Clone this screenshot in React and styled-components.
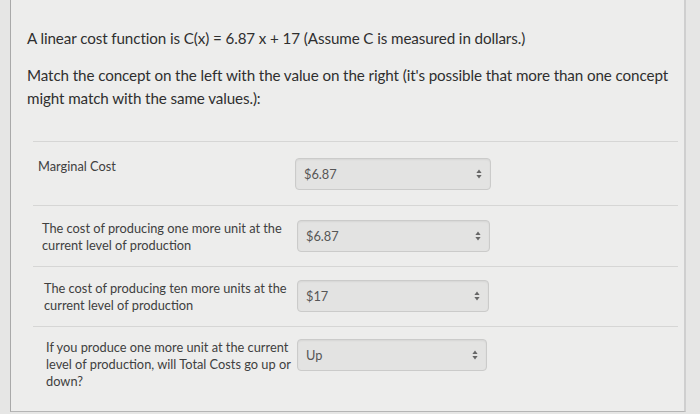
import React from "react";
import styled, { createGlobalStyle } from "styled-components";

const GlobalStyle = createGlobalStyle`
  html, body {
    margin: 0;
    padding: 0;
    background: #e6e6e5;
    font-family: Lato, "Open Sans", "Liberation Sans", sans-serif;
  }
`;

const Page = styled.div`
  width: 700px;
  height: 414px;
  overflow: hidden;
  padding-left: 10px;
  box-sizing: border-box;
`;

const Panel = styled.div`
  width: 676px;
  height: 412px;
  background: #ededec;
  border-left: 1px solid #a9a9a9;
  border-right: 2px solid #cfcfcf;
  border-bottom: 1px solid #b5b5b5;
  padding: 27px 0 0 16px;
  box-sizing: border-box;
`;

const Question = styled.p`
  margin: 0 0 14px;
  font-size: 15.2px;
  line-height: 23px;
  color: #2f2f2f;
  letter-spacing: -0.1px;
  max-width: 655px;
`;

const Answers = styled.div`
  margin: 31px 6px 0 6px;
`;

const Row = styled.div`
  display: flex;
  align-items: flex-start;
  border-top: 1px solid #d6d6d5;
  padding: ${(p) => p.$pad}px 0 0 ${(p) => p.$left}px;
  height: ${(p) => p.$h}px;
  box-sizing: border-box;
`;

const Concept = styled.div`
  width: ${(p) => p.$w}px;
  font-size: 12.8px;
  line-height: 17px;
  color: #404040;
`;

const Select = styled.div`
  display: flex;
  align-items: center;
  justify-content: space-between;
  width: ${(p) => p.$w}px;
  height: 32px;
  box-sizing: border-box;
  margin-left: ${(p) => p.$gap}px;
  padding: 0 8px;
  background: #e3e3e2;
  border: 1px solid #cbcbca;
  border-radius: 4px;
  box-shadow: inset 0 1px 2px rgba(0, 0, 0, 0.06);
  font-size: 12.8px;
  color: #565656;
`;

const Arrows = styled.svg`
  width: 6px;
  height: 10px;
  flex-shrink: 0;
`;

const rows = [
  { concept: "Marginal Cost", value: "$6.87", h: 64, pad: 16, left: 5, w: 251, gap: 6, sw: 196 },
  {
    concept:
      "The cost of producing one more unit at the current level of production",
    value: "$6.87",
    h: 61,
    pad: 14,
    left: 9,
    w: 249,
    gap: 6,
    sw: 193,
  },
  {
    concept:
      "The cost of producing ten more units at the current level of production",
    value: "$17",
    h: 60,
    pad: 13,
    left: 11,
    w: 247,
    gap: 6,
    sw: 192,
  },
  {
    concept:
      "If you produce one more unit at the current level of production, will Total Costs go up or down?",
    value: "Up",
    h: 86,
    pad: 12,
    left: 13,
    w: 249,
    gap: 2,
    sw: 190,
  },
];

export default function App() {
  return (
    <Page>
      <GlobalStyle />
      <Panel>
        <Question>
          A linear cost function is C(x) = 6.87 x + 17 (Assume C is measured in
          dollars.)
        </Question>
        <Question>
          Match the concept on the left with the value on the right (it's
          possible that more than one concept might match with the same
          values.):
        </Question>
        <Answers>
          {rows.map((r, i) => (
            <Row key={i} $h={r.h} $pad={r.pad} $left={r.left}>
              <Concept $w={r.w}>{r.concept}</Concept>
              <Select $w={r.sw} $gap={r.gap}>
                <span>{r.value}</span>
                <Arrows viewBox="0 0 6 10">
                  <path d="M3 0.5 L5.6 4 L0.4 4 Z" fill="#666" />
                  <path d="M3 9.5 L5.6 6 L0.4 6 Z" fill="#666" />
                </Arrows>
              </Select>
            </Row>
          ))}
        </Answers>
      </Panel>
    </Page>
  );
}
